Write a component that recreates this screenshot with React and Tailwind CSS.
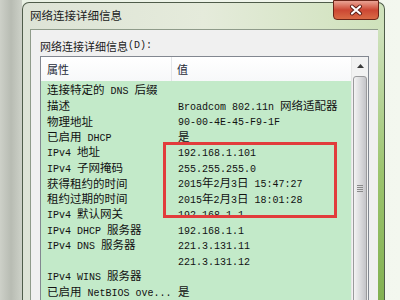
import React from "react";

const CJK_RE = /[\u3000-\u9fff\uff00-\uffef]+|[^\u3000-\u9fff\uff00-\uffef]+/g;
const IS_CJK = /[\u3000-\u9fff\uff00-\uffef]/;

function Mixed({ text, cjk = "text-[11.5px]", latin = "text-[10px]" }) {
  const runs = text.match(CJK_RE) || [];
  return (
    <>
      {runs.map((r, i) =>
        IS_CJK.test(r) ? (
          <span key={i} className={`font-['Noto_Sans_CJK_SC',sans-serif] ${cjk}`}>
            {r}
          </span>
        ) : (
          <span key={i} className={`font-['Liberation_Mono',monospace] ${latin} whitespace-pre`}>
            {r}
          </span>
        )
      )}
    </>
  );
}

const rows = [
  ["连接特定的 DNS 后缀", ""],
  ["描述", "Broadcom 802.11n 网络适配器"],
  ["物理地址", "90-00-4E-45-F9-1F"],
  ["已启用 DHCP", "是"],
  ["IPv4 地址", "192.168.1.101"],
  ["IPv4 子网掩码", "255.255.255.0"],
  ["获得租约的时间", "2015年2月3日 15:47:27"],
  ["租约过期的时间", "2015年2月3日 18:01:28"],
  ["IPv4 默认网关", "192.168.1.1"],
  ["IPv4 DHCP 服务器", "192.168.1.1"],
  ["IPv4 DNS 服务器", "221.3.131.11"],
  ["", "221.3.131.12"],
  ["IPv4 WINS 服务器", ""],
  ["已启用 NetBIOS ove...", "是"],
  ["连接-本地 IPv6 地址", "fe80::3d2c:1a4b:9e1f:6c%11"],
];

export default function App() {
  return (
    <div className="w-[400px] h-[300px] overflow-hidden flex bg-gradient-to-r from-[#e9f1e4] to-[#f3f7ef] text-[#111]">
      <div className="w-[22px] h-full shrink-0 bg-gradient-to-r from-[#cdd0c8] via-[#b8bcb3] to-[#cdd1c8]" />
      <div className="relative w-[363px] shrink-0 mt-[2px] border-l border-t border-r border-[#4f5c4a] rounded-tl-[7px] rounded-tr-[7px] bg-gradient-to-r from-[#dde3d6] via-[#e5ebdb] to-[#cfe2bb] flex flex-col">
        <div className="h-[26px] shrink-0 flex items-center pl-[7px]">
          <span className="font-['Noto_Sans_CJK_SC',sans-serif] text-[11.5px] leading-none text-[#1b1b1b]">
            网络连接详细信息
          </span>
        </div>
        <div className="absolute top-[-3px] right-[5px] w-[46px] h-[20px] rounded-b-[4px] border border-[#6a2418] bg-gradient-to-b from-[#e9a394] via-[#cc4633] to-[#d96a45] flex items-center justify-center">
          <svg width="14" height="12" viewBox="-7 -6 14 12">
            <path d="M-4 -3.5 L4 3.5 M4 -3.5 L-4 3.5" stroke="#5a1d14" strokeWidth="4" strokeLinecap="round" />
            <path d="M-4 -3.5 L4 3.5 M4 -3.5 L-4 3.5" stroke="#ffffff" strokeWidth="2.2" strokeLinecap="round" />
          </svg>
        </div>
        <div className="flex flex-1 pl-[7px]">
          <div className="w-[348px] shrink-0 bg-[#f0f0f0] border-l border-t border-[#8f9b8a] pl-[9px] pt-[9px] flex flex-col">
            <div className="h-[14px] flex items-center leading-none text-[#1b1b1b]">
              <Mixed text="网络连接详细信息(D):" cjk="text-[11px]" latin="text-[10px]" />
            </div>
            <div className="relative mt-[3px] w-[329px] border border-[#828790] flex bg-white">
              <div className="w-[310px] flex flex-col">
                <div className="h-[24px] flex bg-gradient-to-b from-[#ffffff] to-[#f7f8f9]">
                  <div className="w-[131px] border-r border-[#e3e5e8] flex items-center pl-[6px]">
                    <span className="font-['Noto_Sans_CJK_SC',sans-serif] text-[11px] text-[#1e2a38]">属性</span>
                  </div>
                  <div className="flex-1 flex items-center pl-[5px]">
                    <span className="font-['Noto_Sans_CJK_SC',sans-serif] text-[11px] text-[#1e2a38]">值</span>
                  </div>
                </div>
                <div className="flex flex-col bg-[#c3eac9]">
                  {rows.map(([k, v], i) => (
                    <div key={i} className="h-[15.5px] flex items-center whitespace-nowrap leading-none">
                      <div className="w-[131px] pl-[6px] overflow-hidden">
                        <Mixed text={k} />
                      </div>
                      <div className="flex-1 pl-[6px] overflow-hidden">
                        <Mixed text={v} />
                      </div>
                    </div>
                  ))}
                </div>
              </div>
              <div className="w-[17px] bg-[#f2f2f2] flex flex-col border-l border-[#e6e6e6]">
                <div className="h-[18px] flex items-center justify-center">
                  <svg width="7" height="4" viewBox="0 0 7 4">
                    <path d="M0 4 L3.5 0 L7 4 Z" fill="#3a3a3a" />
                  </svg>
                </div>
                <div className="flex-1 mx-[1px] mt-[1px] rounded-t-[3px] border border-[#9a9a9c] bg-gradient-to-r from-[#f3f3f3] via-[#dcdcde] to-[#c4c4c8] flex flex-col items-center pt-[108px]">
                  <div className="w-[6px] h-[1px] bg-[#8a8a8a]" />
                  <div className="w-[6px] h-[1px] bg-[#8a8a8a] mt-[1px]" />
                  <div className="w-[6px] h-[1px] bg-[#8a8a8a] mt-[1px]" />
                  <div className="w-[6px] h-[1px] bg-[#8a8a8a] mt-[1px]" />
                </div>
              </div>
              <div className="absolute left-[122px] top-[85px] w-[174px] h-[76px] border-[3px] border-[#e23c3c]" />
            </div>
          </div>
          <div className="w-[6px] shrink-0 bg-gradient-to-b from-[#cfe2bd] via-[#9cc46e] to-[#7fae4e]" />
        </div>
      </div>
      <div className="flex-1" />
    </div>
  );
}
